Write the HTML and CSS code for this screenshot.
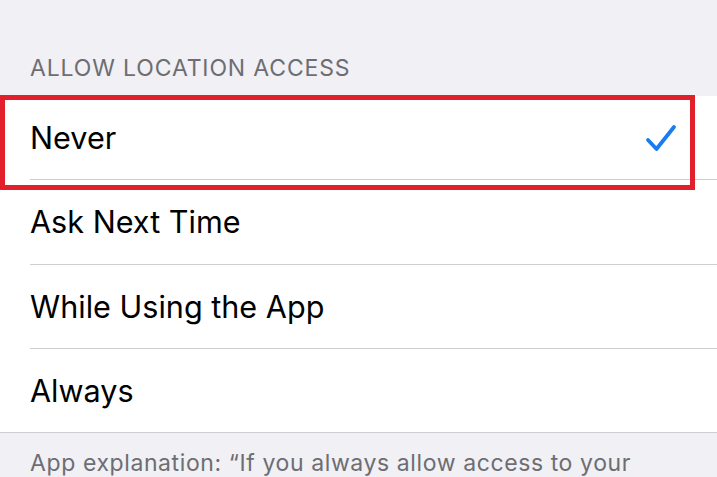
FILE: index.html
```html
<!DOCTYPE html>
<html>
<head>
<meta charset="utf-8">
<link rel="stylesheet" href="styles.css">
</head>
<body>
<div class="screen">
  <div class="section-header">ALLOW LOCATION ACCESS</div>
  <div class="list">
    <div class="row">
      <span class="label">Never</span>
      <svg class="check" width="32" height="30" viewBox="0 0 32 30"><path d="M3 17 L11.5 26 L29 4" fill="none" stroke="#1a7cf0" stroke-width="3.8" stroke-linecap="round" stroke-linejoin="round"/></svg>
    </div>
    <div class="row"><span class="label">Ask Next Time</span></div>
    <div class="row"><span class="label">While Using the App</span></div>
    <div class="row last"><span class="label">Always</span></div>
  </div>
  <div class="footer">App explanation: “If you always allow access to your</div>
  <div class="highlight"></div>
</div>
</body>
</html>
```
FILE: styles.css
```css
html, body {
  margin: 0;
  padding: 0;
  background: #f0f0f5;
}
.screen {
  position: relative;
  width: 717px;
  height: 477px;
  overflow: hidden;
  background: #f0f0f5;
  font-family: Inter, "Noto Sans", sans-serif;
}
.section-header {
  height: 96px;
  box-sizing: border-box;
  padding: 54px 0 0 30px;
  font-size: 23px;
  color: #6d6d72;
  letter-spacing: 0.85px;
}
.list {
  background: #fff;
}
.row {
  height: 84.3px;
  box-sizing: border-box;
  margin-left: 30px;
  padding-right: 40px;
  display: flex;
  align-items: center;
  justify-content: space-between;
  border-bottom: 1.5px solid #cfcfd3;
}
.row.last {
  margin-left: 0;
  padding-left: 30px;
}
.label {
  font-size: 30.6px;
  color: #000;
}
.check {
  display: block;
}
.footer {
  padding: 16px 0 0 30px;
  font-size: 23px;
  color: #6d6d72;
  letter-spacing: 0.6px;
  white-space: nowrap;
}
.highlight {
  position: absolute;
  left: 0;
  top: 95px;
  width: 695px;
  height: 95px;
  box-sizing: border-box;
  border: 5px solid #e2202b;
}
```
